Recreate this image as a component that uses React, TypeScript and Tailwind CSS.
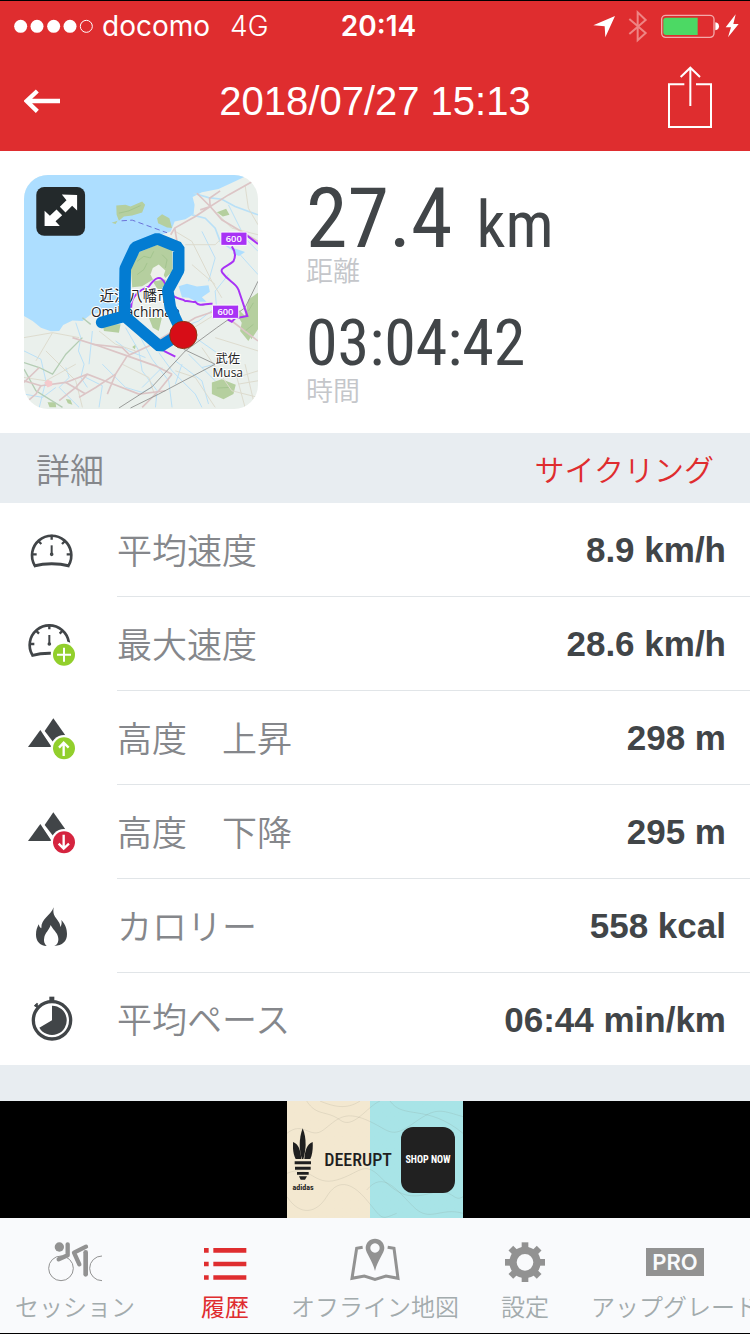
import type { ReactNode } from "react";

const INK = "#414548";
const GREEN = "#92cf2c";
const CRIMSON = "#d5243f";
const GREY = "#929292";

function Gauge() {
  return (
    <g fill="none" stroke={INK} strokeWidth="8">
      <path d="M104 196 A59 59 0 1 1 206 196" />
      <path d="M101 198 Q155 184 209 198" strokeWidth="9" />
      <path d="M155 104V119M115 123L124 132M195 123L186 132M98 163H110M212 163H200" strokeWidth="7" />
      <path d="M155 136V162" strokeWidth="6" />
      <circle cx="155" cy="163" r="3" strokeWidth="5" />
    </g>
  );
}

function Mountains() {
  return (
    <g fill={INK}>
      <path d="M84 741L121 690L155 741Z" />
      <path d="M160 655L134 693L160 727L196 706Z" />
      <path d="M130 697L162 744" stroke="#fff" strokeWidth="5" />
      <circle cx="192" cy="745" r="40" fill="#fff" />
    </g>
  );
}

function RowIcon({ box, children }: { box: string; children: ReactNode }) {
  return (
    <svg viewBox={box} className="h-12 w-12" aria-hidden="true">
      {children}
    </svg>
  );
}

const stats: { label: string; value: string; icon: ReactNode }[] = [
  {
    label: "平均速度",
    value: "8.9 km/h",
    icon: (
      <RowIcon box="81 78 144 144">
        <Gauge />
      </RowIcon>
    ),
  },
  {
    label: "最大速度",
    value: "28.6 km/h",
    icon: (
      <RowIcon box="81 360 144 144">
        <g transform="translate(-7 269)">
          <Gauge />
        </g>
        <circle cx="192" cy="464" r="40" fill="#fff" />
        <circle cx="192" cy="464" r="33" fill={GREEN} />
        <path d="M192 443V485M171 464H213" stroke="#fff" strokeWidth="6" />
      </RowIcon>
    ),
  },
  {
    label: "高度　上昇",
    value: "298 m",
    icon: (
      <RowIcon box="81 642 144 144">
        <Mountains />
        <circle cx="192" cy="745" r="33" fill={GREEN} />
        <path d="M191 768V729M177 743L191 728L206 743" fill="none" stroke="#fff" strokeWidth="7" />
      </RowIcon>
    ),
  },
  {
    label: "高度　下降",
    value: "295 m",
    icon: (
      <RowIcon box="81 84 144 144">
        <g transform="translate(0 -558)">
          <Mountains />
        </g>
        <circle cx="192" cy="187" r="33" fill={CRIMSON} />
        <path d="M191 164V204M176 191L191 206L207 191" fill="none" stroke="#fff" strokeWidth="7" />
      </RowIcon>
    ),
  },
  {
    label: "カロリー",
    value: "558 kcal",
    icon: (
      <RowIcon box="81 363 144 144">
        <path
          fill={INK}
          d="M161 379C158 398 163 405 170 414C177 423 181 430 181 438C185 432 186 425 184 417C197 432 201 444 201 459C201 482 187 493 163 495C174 489 177 480 174 467C171 454 158 445 152 432C148 447 136 455 133 468C130 481 133 489 140 495C119 493 108 480 108 461C108 448 111 440 116 430C118 436 119 439 124 442C123 412 152 405 161 379Z"
        />
      </RowIcon>
    ),
  },
  {
    label: "平均ペース",
    value: "06:44 min/km",
    icon: (
      <RowIcon box="81 645 144 144">
        <circle cx="156" cy="721" r="56" fill="none" stroke={INK} strokeWidth="10" />
        <path d="M148 650H163V663H148Z" fill={INK} />
        <path d="M106 674L116 684" stroke={INK} strokeWidth="8" />
        <path d="M104 679L113 670" stroke={INK} strokeWidth="6" />
        <path d="M156 677A44 44 0 1 1 118 743L156 721Z" fill={INK} />
      </RowIcon>
    ),
  },
];

const tabs: { label: string; active?: boolean; icon: ReactNode }[] = [
  {
    label: "セッション",
    icon: (
      <svg viewBox="135 69 180 132" className="h-11 w-15" aria-hidden="true">
        <g fill="none" stroke={GREY}>
          <circle cx="183" cy="160" r="37" strokeWidth="3" />
          <path d="M306 123A37 37 0 0 0 306 197" strokeWidth="3" />
          <path d="M203 88V121L176 133" strokeWidth="13" strokeLinecap="round" strokeLinejoin="round" />
          <path d="M258 95L222 113L238 148" strokeWidth="13" strokeLinecap="round" strokeLinejoin="round" />
          <path d="M257 112V178" strokeWidth="14" strokeLinecap="round" />
        </g>
        <circle cx="178" cy="96" r="14" fill={GREY} />
      </svg>
    ),
  },
  {
    label: "履歴",
    active: true,
    icon: (
      <svg viewBox="585 69 180 132" className="h-11 w-15" aria-hidden="true">
        <path
          fill="#df2d2f"
          d="M612 99h14v14h-14zM640 99h99v14h-99zM612 140h14v14h-14zM640 140h99v14h-99zM612 181h14v13h-14zM640 181h99v13h-99z"
        />
      </svg>
    ),
  },
  {
    label: "オフライン地図",
    icon: (
      <svg viewBox="1035 69 180 132" className="h-11 w-15" aria-hidden="true">
        <path
          d="M1088 97L1070 100L1056 190L1093 183L1125 193L1158 183L1194 190L1182 100L1163 97"
          fill="none"
          stroke={GREY}
          strokeWidth="9"
        />
        <path
          fillRule="evenodd"
          fill={GREY}
          d="M1125 71C1109 71 1097 83 1097 99C1097 114 1117 135 1125 168C1133 135 1153 114 1153 99C1153 83 1141 71 1125 71ZM1125 85A14 14 0 1 1 1124.900 85Z"
        />
      </svg>
    ),
  },
  {
    label: "設定",
    icon: (
      <svg viewBox="360 69 180 132" className="h-11 w-15" aria-hidden="true">
        {[0, 45, 90, 135, 180, 225, 270, 315].map((angle) => (
          <rect key={angle} x="440" y="82" width="20" height="24" fill={GREY} transform={`rotate(${angle} 450 142)`} />
        ))}
        <circle cx="450" cy="142" r="36" fill="none" stroke={GREY} strokeWidth="22" />
      </svg>
    ),
  },
  {
    label: "アップグレード",
    icon: (
      <span className="flex h-11 items-center">
        <span className="mt-1 flex h-7 items-center bg-[#929292] px-1.5 font-['Inter'] text-[22px] font-semibold text-[#f9fafc]">
          PRO
        </span>
      </span>
    ),
  },
];

function RouteMap() {
  return (
    <svg viewBox="24 30 705 705" className="h-full w-full" aria-hidden="true">
      <rect x="24" y="30" width="705" height="705" fill="#eaf0ec" />
      <path
        fill="#addeff"
        d="M24 30H700L662 48L610 72L560 82L532 96L538 120L535 148L510 163L478 170L466 200L380 230L330 330L320 430L225 450L200 470L170 468L142 482L130 500L105 501L75 490L50 470L24 455Z"
      />
      <path fill="#addeff" d="M490 365L515 358L545 366L580 362L584 382L560 398L574 412L545 412L520 400L500 398ZM655 250L690 262L672 274L655 268Z" />
      <g fill="#b5cf9f">
        <path d="M302 122L330 120L345 125L380 110L389 120L380 143L350 152L325 155L310 168L303 150Z" />
        <path d="M288 174L306 168L300 178ZM425 160L440 148L462 160L470 190L455 188L428 175Z" />
        <path d="M372 262L425 240L470 250L472 320L450 340L432 310L420 340L380 365L350 368L345 300Z" />
        <path d="M412 350L450 345L455 380L425 372ZM729 385L700 405L690 455L665 430L650 425L680 475L675 500L700 530L729 480Z" />
        <path d="M590 655L620 645L662 662L655 690L625 706L590 690ZM400 460L440 458L430 500L412 490ZM260 480L315 480L310 505L265 500Z" />
        <path d="M350 548l12-8-4 15zM150 705l14 2 6 15-14-4zM95 715l24 0 2 15-20 0zM605 142l28-10 10 18-20 5zM700 505l29-30v20l-20 30z" />
      </g>
      <g fill="none" stroke="#9cbf88" strokeWidth="3" opacity=".7">
        <path d="M310 145L340 138L375 122M365 290L385 275L405 280L415 260M365 330L385 315L395 295M440 270L455 285L450 310M700 440L715 415M690 500L715 480M605 672L640 670" />
      </g>
      <path d="M412 310L430 300L450 318L440 345L415 350L405 330Z" fill="#edf1eb" />
      <g fill="none" stroke="#b9e0f7" strokeWidth="3">
        <path d="M535 85L580 98L620 103L660 125L729 150M530 150L570 160L600 190L615 230L660 260" strokeWidth="5" />
        <path d="M180 475L195 520L188 560L205 600L195 640L215 670M24 560L75 585L90 650L70 730M150 610L160 640L130 670L190 730M210 640L260 665L250 730" />
        <path d="M330 490L370 560L380 620L425 680L420 730M370 510L410 585L460 650L470 730M430 565L470 620L540 690L560 730M260 600L330 670L380 685L410 670" />
        <path d="M520 570L600 650M470 500L550 470L600 430M540 520L640 590M560 610L600 600M640 120L690 220L729 260M675 270L729 330M560 200L600 280L580 350M24 690L80 700L120 670M480 590L560 650L580 720" />
        <path d="M300 530L340 560L390 580M440 610L410 640L380 670M500 600L480 660M640 330L600 380L605 440M230 500L220 600" />
      </g>
      <g fill="none" stroke="#dddbce" strokeWidth="3">
        <path d="M480 200L530 230L590 350L620 400M510 240L600 240L640 200M530 300L600 360M24 520L110 505L190 520M110 505L60 590M250 500L300 540L360 560M440 520L520 500L600 450" />
        <path d="M600 520L729 560M560 550L650 680L729 700M480 620L540 640L600 730M90 560L180 650L200 730M320 600L400 640L420 700M24 640L90 650L180 600" />
        <path d="M690 60L700 130L729 180M590 130L650 190L729 210M665 640L729 620M670 660L729 650M660 620L690 730M690 600L720 730" />
      </g>
      <g fill="none" stroke="#b4cdb4" strokeWidth="4">
        <path d="M24 595L70 610L110 630L150 570L200 520M24 615L60 680L140 730M200 460L225 480" />
      </g>
      <g fill="none" stroke="#dcc5c6" strokeWidth="5">
        <path d="M729 40L640 90L585 125L540 155L478 190L466 210M585 125L545 85M585 125L620 165L729 230M555 135L585 125L583 100L615 78" />
        <path d="M600 440L540 460L490 490L400 545L335 575L300 630L275 690M170 520L250 545L335 575L420 605L470 630M24 650L75 665L150 655L215 630L280 655L370 690L450 680" />
        <path d="M215 630L180 670L130 710M150 655L210 690M75 665L60 690L24 720M300 630L240 670L190 700M340 570L320 550L230 540M470 630L430 680L380 730" />
        <path d="M478 190L490 260M729 530L650 470L600 440M70 610L24 655" />
      </g>
      <path d="M85 655l10-8 14 5 0 12-14 6z" fill="#f5c9cc" />
      <g fill="none" stroke="#999b99" strokeWidth="3">
        <path d="M310 732L410 668L510 560L605 490L690 430L729 350M345 732L430 690L600 600M505 555L600 600" />
      </g>
      <path d="M318 168L350 166L455 204" fill="none" stroke="#6b72d8" strokeWidth="3" strokeDasharray="16 10" />
      <g fill="none" stroke="#a832f5" strokeWidth="6">
        <path d="M650 245C665 265 660 280 655 290C640 305 610 310 622 325C640 350 662 355 670 375L697 455L660 462L650 472L638 466M695 212L729 238M347 430C345 390 380 375 400 366C420 338 435 330 448 355L465 385C480 408 500 400 510 410C525 408 530 415 540 412C555 430 570 415 592 418M445 560L480 577" />
      </g>
      <g stroke="#fff" strokeWidth="3" fill="#a832f5">
        <rect x="617" y="202" width="79" height="40" rx="3" />
        <rect x="592" y="422" width="79" height="40" rx="3" />
      </g>
      <g fill="#fff" fontFamily="'Open Sans', sans-serif" fontSize="28" fontWeight="600" textAnchor="middle">
        <text x="656" y="232">600</text>
        <text x="631" y="452">600</text>
      </g>
      <g
        fill="#222"
        stroke="#fff"
        strokeWidth="6"
        paintOrder="stroke"
        fontFamily="'Open Sans', 'Noto Sans CJK JP', sans-serif"
        textAnchor="middle"
      >
        <text x="360" y="409" fontSize="43">近江八幡市</text>
        <text x="360" y="459" fontSize="41">Omihachiman</text>
        <text x="638" y="596" fontSize="37">武佐</text>
        <text x="638" y="639" fontSize="36">Musa</text>
      </g>
      <path
        d="M258 474L327 455L329 312L359 248L425 222L490 248V317L457 378L465 430L500 505L434 547L327 455"
        fill="none"
        stroke="#037cd2"
        strokeWidth="35"
        strokeLinejoin="bevel"
        strokeLinecap="round"
      />
      <circle cx="504" cy="512" r="41" fill="#d70d17" stroke="#8a3414" strokeWidth="3" />
      <rect x="61" y="66" width="147" height="147" rx="24" fill="#23292b" />
      <g fill="#fff">
        <path d="M138 89L184 90L184 137L169 123L149 143L132 126L152 106Z" />
        <path d="M86 138L102 153L122 134L139 151L119 169L132 184H86Z" />
      </g>
      <path d="M121 123L151 153" stroke="#23292b" strokeWidth="6" />
    </svg>
  );
}

function StatusBar() {
  return (
    <div className="grid h-[50px] grid-cols-3 items-center pr-[11px] pl-3.5 font-['Inter'] text-[28px] leading-none">
      <div className="flex items-center gap-2 whitespace-nowrap">
        <svg viewBox="45 54 240 42" className="h-3.5 w-20 shrink-0" aria-hidden="true">
          <g fill="#fff">
            <circle cx="65" cy="76" r="19.500" />
            <circle cx="114" cy="76" r="19.500" />
            <circle cx="164" cy="76" r="19.500" />
            <circle cx="213" cy="76" r="19.500" />
          </g>
          <circle cx="262" cy="76" r="18" fill="none" stroke="#fff" strokeWidth="3" />
        </svg>
        <span>docomo</span>
        <span className="ml-3 font-light">4G</span>
      </div>
      <span className="ml-1 text-center font-semibold">20:14</span>
      <svg viewBox="650 24 441 102" className="h-[34px] w-[147px] justify-self-end" aria-hidden="true">
        <path d="M654 73L719 45L690 109L688 76Z" fill="#fff" />
        <path d="M762 54L811 96L787 118V34L811 57L762 99" fill="none" stroke="#ee8584" strokeWidth="6" />
        <rect x="859" y="43" width="157" height="66" rx="12" fill="none" stroke="#f3aaaa" strokeWidth="4" />
        <path d="M872 50H967V102H872Q864 102 864 94V58Q864 50 872 50Z" fill="#4cd964" />
        <path d="M1020 64Q1031 66 1031 76Q1031 86 1020 88Z" fill="#fff" />
        <path d="M1081 40L1051 79H1067L1058 109L1090 69H1074Z" fill="#fff" />
      </svg>
    </div>
  );
}

function AdBanner() {
  return (
    <a
      href="#ad"
      className="relative flex h-[117px] w-44 items-center justify-between overflow-hidden bg-linear-to-r from-[#f3e8d0] from-47% to-[#a8e4e7] to-47% pr-2 pl-1 font-['Roboto_Condensed','Roboto',sans-serif] text-[#1f1f1f]"
    >
      <svg viewBox="21 33 528 351" className="absolute inset-0 h-full w-full" aria-hidden="true">
        <g fill="none" stroke="#77776b" strokeOpacity=".14" strokeWidth="3">
          <path d="M21 130C70 90 90 150 130 120S190 60 260 90S330 150 400 100S480 60 549 80" />
          <path d="M21 250C90 220 100 290 170 270S250 210 300 260S380 330 450 310S520 340 549 320" />
          <path d="M21 320C60 380 110 370 140 320S210 270 260 330S300 390 350 370" />
          <path d="M80 33C110 80 140 60 180 90S260 50 300 33M330 33C370 90 440 40 549 130" />
          <path d="M260 300C310 240 350 300 400 350S480 350 549 370M120 33C160 50 200 60 240 33" />
        </g>
      </svg>
      <span className="relative flex w-6 flex-col items-center">
        <svg viewBox="38 88 60 154" className="mt-1 h-[52px] w-5" aria-hidden="true">
          <g fill="#1f1f1f">
            <path d="M67 88C80 120 77 155 69 180H65C56 155 55 120 67 88Z" />
            <path d="M38 129C55 135 61 155 63 180H46C38 165 37 145 38 129ZM97 129C80 135 74 155 72 180H90C97 165 98 145 97 129Z" />
            <path d="M43 187H92V196H43ZM44 203H91V212H44ZM50 219H85V227H50ZM56 232H80L74 242H61Z" />
          </g>
        </svg>
        <span className="text-[8px] leading-4 font-bold">adidas</span>
      </span>
      <span className="relative text-[18px] font-medium">DEERUPT</span>
      <span className="relative flex h-[66px] w-[54px] items-center justify-center rounded-xl bg-[#212121] text-[10px] font-bold whitespace-nowrap text-white">
        SHOP NOW
      </span>
    </a>
  );
}

export default function App() {
  return (
    <div className="flex min-h-screen flex-col overflow-x-hidden border-y border-black bg-[#e8edf1] font-['Liberation_Sans','Noto_Sans_CJK_JP',sans-serif] text-[#414548]">
      <header className="bg-[#df2d2f] text-white">
        <StatusBar />
        <div className="flex h-[100px] items-center justify-between pr-[38px] pl-6">
          <button type="button" aria-label="戻る" className="flex w-[58px] items-center">
            <svg viewBox="72 264 111 72" className="h-6 w-[37px]" aria-hidden="true">
              <path d="M180 300H80M112 270L80 300L112 331" fill="none" stroke="#fff" strokeWidth="13" />
            </svg>
          </button>
          <h1 className="text-[40px] leading-none">2018/07/27 15:13</h1>
          <button type="button" aria-label="共有">
            <svg viewBox="879 195 132 216" className="block h-[72px] w-11" aria-hidden="true">
              <path
                d="M928 253H882V381H1008V253H963M946 318V204M917 231L946 203L975 231"
                fill="none"
                stroke="#fff"
                strokeWidth="6"
              />
            </svg>
          </button>
        </div>
      </header>

      <main className="flex-1">
        <section className="flex items-start gap-12 bg-white px-6 py-6">
          <button type="button" aria-label="地図を拡大" className="h-[234px] w-[234px] shrink-0 overflow-hidden rounded-3xl">
            <RouteMap />
          </button>
          <dl className="font-['Roboto_Condensed','Liberation_Sans','Noto_Sans_CJK_JP',sans-serif]">
            <div className="flex flex-col-reverse">
              <dt className="text-[27px] leading-7 font-[350] text-[#c4c6ca]">距離</dt>
              <dd className="flex items-baseline gap-6 pt-2 text-[84px] leading-[72px]">
                27.4 <span className="text-[64px] leading-none">km</span>
              </dd>
            </div>
            <div className="mt-6 flex flex-col-reverse">
              <dt className="text-[27px] leading-7 font-[350] text-[#c4c6ca]">時間</dt>
              <dd className="text-[64px] leading-[68px]">03:04:42</dd>
            </div>
          </dl>
        </section>

        <div className="flex h-[70px] items-center justify-between px-9 pt-1.5">
          <h2 className="text-[34px] leading-none font-[350] text-[#85878b]">詳細</h2>
          <span className="text-[30px] leading-none font-[350] text-[#df2d2f]">サイクリング</span>
        </div>

        <dl className="bg-white">
          {stats.map((stat, index) => (
            <div key={stat.label} className="flex items-stretch pl-[27px]">
              <span className="flex w-[90px] items-center">{stat.icon}</span>
              <div
                className={
                  index < stats.length - 1
                    ? "flex h-[94px] flex-1 items-center justify-between border-b border-[#e1e5e8] pr-6"
                    : "flex h-[92px] flex-1 items-center justify-between pr-6"
                }
              >
                <dt className="pt-[3px] text-[35px] leading-none font-[350] text-[#85878b]">{stat.label}</dt>
                <dd className="text-[35px] leading-none font-bold">{stat.value}</dd>
              </div>
            </div>
          ))}
        </dl>
      </main>

      <aside className="mt-9 flex justify-center bg-black">
        <AdBanner />
      </aside>

      <nav className="grid grid-cols-5 bg-[#f9fafc] pt-5 pb-[7px]">
        {tabs.map((tab) => (
          <a
            key={tab.label}
            href="#tab"
            aria-current={tab.active ? "page" : undefined}
            className={
              tab.active
                ? "flex min-w-0 flex-col items-center gap-2 text-[#df2d2f]"
                : "flex min-w-0 flex-col items-center gap-2 font-[350] text-[#a3abad]"
            }
          >
            {tab.icon}
            <span className="text-2xl leading-9 whitespace-nowrap">{tab.label}</span>
          </a>
        ))}
      </nav>
    </div>
  );
}
